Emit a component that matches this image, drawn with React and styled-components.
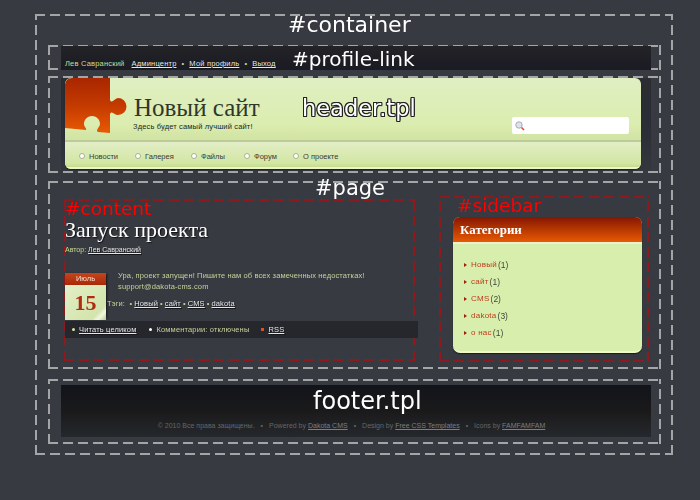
import React from "react";
import styled, { createGlobalStyle, css } from "styled-components";

const Global = createGlobalStyle`
  html, body { margin: 0; padding: 0; background: #373a40; }
  body { font-family: "Liberation Sans", Arial, sans-serif; width: 700px; height: 500px; overflow: hidden; }
  a { color: inherit; }
`;

const dashed = (color) => css`
  background-image:
    repeating-linear-gradient(90deg, ${color} 0 10px, transparent 10px 15px),
    repeating-linear-gradient(90deg, ${color} 0 10px, transparent 10px 15px),
    repeating-linear-gradient(0deg, ${color} 0 10px, transparent 10px 15px),
    repeating-linear-gradient(0deg, ${color} 0 10px, transparent 10px 15px);
  background-size: 100% 2px, 100% 2px, 2px 100%, 2px 100%;
  background-position: 0 0, 0 100%, 0 0, 100% 0;
  background-repeat: no-repeat;
`;

const Stage = styled.div`
  position: relative;
  width: 700px;
  height: 500px;
  padding: 14px 0 0 35px;
  box-sizing: border-box;
`;
const Container = styled.div`
  ${dashed("#a3a5a7")}
  box-sizing: border-box;
  width: 638px;
  height: 441px;
  padding: 31px 11px 0 13px;
  display: flex;
  flex-direction: column;
  filter: blur(0.3px);
`;
const Region = styled.section`
  ${dashed("#a3a5a7")}
  box-sizing: border-box;
  width: 613px;
  height: ${(p) => p.$h}px;
  margin-bottom: ${(p) => p.$mb}px;
  padding: ${(p) => p.$pad};
  display: flex;
`;
const ProfileBar = styled.div`
  flex: 1;
  background: linear-gradient(#232327, #1a1b23);
  display: flex;
  align-items: flex-end;
  gap: 5px;
  padding: 0 0 1px 4px;
  font-size: 7.5px;
  letter-spacing: 0.2px;
  line-height: 10px;
  color: #c9dc92;
  height: 24px;
  box-sizing: border-box;
`;
const UserName = styled.span`
  margin-right: 2px;
`;
const WhiteLink = styled.a`
  color: #e6e6e6;
  text-decoration: underline;
  text-shadow: 1px 1px 0 #15161a;
`;
const HeaderBack = styled.div`
  flex: 1;
  padding: 0 10px 0 4px;
  background: linear-gradient(#2b2d31 0, #2b2d37 50%, #34373c 100%);
`;
const Banner = styled.div`
  height: 91px;
  border-radius: 6px;
  overflow: hidden;
  background: linear-gradient(#e0efc2 0, #dcedb0 50%, #cfe2a0 71%);
  box-shadow: 0 1px 1px #20222a;
  display: flex;
  flex-direction: column;
`;
const BannerTop = styled.div`
  height: 64px;
  display: flex;
  position: relative;
  box-sizing: border-box;
  border-bottom: 2px solid #bccb98;
`;
const Puzzle = styled.svg`
  width: 62px;
  height: 56px;
  flex: none;
`;
const Brand = styled.div`
  padding: 15px 0 0 7px;
  display: flex;
  flex-direction: column;
`;
const SiteTitle = styled.div`
  font-family: "Liberation Serif", serif;
  font-size: 25px;
  line-height: 29px;
  color: #2f372b;
`;
const Tagline = styled.div`
  font-size: 7.5px;
  line-height: 10px;
  margin-left: -1px;
  color: #20261c;
  letter-spacing: 0.15px;
`;
const Search = styled.div`
  position: absolute;
  right: 12px;
  top: 39px;
  width: 117px;
  height: 17px;
  background: #fff;
  border-radius: 2px;
  display: flex;
  align-items: center;
  padding-left: 2px;
  box-sizing: border-box;
`;
const Nav = styled.nav`
  flex: 1;
  display: flex;
  align-items: center;
  padding: 3px 0 0 14px;
  background: linear-gradient(#e2eec6, #d3e6a3 85%, #c6db8c);
  border-bottom: 2px solid #eaf5c8;
  box-sizing: border-box;
`;
const NavItem = styled.div`
  width: ${(p) => p.$w}px;
  display: flex;
  align-items: center;
  gap: 4px;
  font-size: 7.5px;
  color: #363d30;
`;
const Bullet = styled.span`
  width: 6px;
  height: 6px;
  border-radius: 50%;
  background: #fff;
  border: 1px solid #a7b38f;
  box-sizing: border-box;
`;
const Content = styled.div`
  ${dashed("#8e1a1e")}
  box-sizing: border-box;
  width: 351px;
  height: 162px;
  margin-top: 16px;
  padding: 19px 0 0 1px;
  flex: none;
`;
const PostTitle = styled.h1`
  margin: 0;
  font-family: "Liberation Serif", serif;
  font-weight: 400;
  font-size: 22px;
  line-height: 24px;
  color: #fff;
  text-shadow: 1px 1px 1px #111;
`;
const Meta = styled.div`
  font-size: 7px;
  line-height: 10px;
  margin-top: 3px;
  color: #c9dc92;
`;
const PostRow = styled.div`
  display: flex;
  margin-top: 18px;
`;
const Calendar = styled.div`
  width: 41px;
  height: 44px;
  flex: none;
  display: flex;
  flex-direction: column;
  box-shadow: 1px 1px 2px #15161a;
`;
const Month = styled.div`
  height: 12px;
  background: linear-gradient(#c4451c, #a92808);
  color: #f4e0d0;
  font-size: 7.5px;
  line-height: 12px;
  text-align: center;
`;
const Day = styled.div`
  flex: 1;
  background: linear-gradient(135deg, #e3efc6 0, #d3e4ac 80%, #f2f6e2 88%, #b9ca92 100%);
  color: #b02c10;
  font-family: "Liberation Serif", serif;
  font-weight: 700;
  font-size: 22px;
  line-height: 35px;
  text-align: center;
`;
const PostBody = styled.div`
  font-size: 7.5px;
  color: #c3d39a;
  letter-spacing: 0.13px;
  line-height: 11px;
`;
const BodyText = styled.div`
  margin-top: -3px;
  padding: 0 0 0 12px;
`;
const Tags = styled.div`
  margin-top: 6px;
  padding-left: 1px;
  display: flex;
  gap: 2px;
`;
const PostBar = styled.div`
  width: 353px;
  height: 17px;
  margin-top: 4px;
  background: #26272d;
  display: flex;
  align-items: center;
  font-size: 7.5px;
  letter-spacing: 0.15px;
  color: #c3d39a;
`;
const BarItem = styled.div`
  display: flex;
  align-items: center;
  gap: 4px;
  margin-left: ${(p) => p.$ml}px;
`;
const Dot = styled.span`
  width: 3px;
  height: 3px;
  border-radius: ${(p) => (p.$square ? 0 : "50%")};
  background: ${(p) => p.$c};
`;
const SideZone = styled.div`
  ${dashed("#8e1a1e")}
  box-sizing: border-box;
  width: 210px;
  height: 166px;
  margin: 13px 0 0 24px;
  padding: 21px 7px 0 14px;
  flex: none;
`;
const SideBox = styled.div`
  height: 136px;
  border-radius: 7px;
  overflow: hidden;
  background: #d8eeac;
  box-shadow: 0 1px 1px #1c1e22;
  border-bottom: 2px solid #eef8c8;
  box-sizing: border-box;
`;
const SideHead = styled.div`
  height: 25px;
  background: linear-gradient(#851602, #e85a02);
  border-bottom: 2px solid #f0f0cf;
  box-sizing: content-box;
  color: #fff;
  font-family: "Liberation Serif", serif;
  font-weight: 700;
  font-size: 13px;
  line-height: 26px;
  padding-left: 7px;
`;
const CatList = styled.ul`
  list-style: none;
  margin: 0;
  padding: 12px 0 0 11px;
`;
const Cat = styled.li`
  height: 17px;
  display: flex;
  align-items: center;
  gap: 4px;
  font-size: 8.5px;
  color: #3f453a;
`;
const Arrow = styled.span`
  width: 0;
  height: 0;
  border-left: 3px solid #a2200a;
  border-top: 2.5px solid transparent;
  border-bottom: 2.5px solid transparent;
`;
const CatLink = styled.span`
  color: #bd3c1c;
  font-size: 8px;
  letter-spacing: 0.25px;
  margin-right: -3px;
`;
const Footer = styled.footer`
  flex: 1;
  background: linear-gradient(#12141a, #1a1a1b 50%, #25282c);
  display: flex;
  justify-content: center;
  align-items: flex-end;
  gap: 6px;
  padding: 0 9px 6px 0;
  font-size: 7px;
  line-height: 10px;
  color: #63666a;
`;
const FootLink = styled.a`
  text-decoration: underline;
  color: #7b7e82;
`;
const Label = styled.div`
  position: absolute;
  left: ${(p) => p.$x}px;
  top: ${(p) => p.$y}px;
  font-family: "DejaVu Sans", sans-serif;
  font-size: ${(p) => p.$size || 19}px;
  line-height: 24px;
  color: ${(p) => p.$c || "#fff"};
  white-space: nowrap;
  ${(p) =>
    p.$outline &&
    css`
      text-shadow: 1px 0 0 #222, -1px 0 0 #222, 0 1px 0 #222, 0 -1px 0 #222,
        1px 1px 0 #222, -1px -1px 0 #222, 1px -1px 0 #222, -1px 1px 0 #222;
    `}
`;

const nav = [
  ["Новости", 56],
  ["Галерея", 56],
  ["Файлы", 53],
  ["Форум", 49],
  ["О проекте", 70],
];
const cats = [
  ["Новый", 1],
  ["сайт", 1],
  ["CMS", 2],
  ["dakota", 3],
  ["о нас", 1],
];

export default function App() {
  return (
    <Stage>
      <Global />
      <Container>
        <Region $h={25} $mb={6} $pad="1px 10px 0 13px">
          <ProfileBar>
            <UserName>Лев Савранский</UserName>
            <WhiteLink>Админцентр</WhiteLink>
            <span>•</span>
            <WhiteLink>Мой профиль</WhiteLink>
            <span>•</span>
            <WhiteLink>Выход</WhiteLink>
          </ProfileBar>
        </Region>
        <Region $h={97} $mb={8} $pad="2px 10px 2px 13px">
          <HeaderBack>
            <Banner>
              <BannerTop>
                <Puzzle viewBox="0 0 62 56">
                  <defs>
                    <linearGradient id="pz" x1="0" y1="0" x2="0" y2="1">
                      <stop offset="0" stopColor="#a82600" />
                      <stop offset="0.5" stopColor="#c43a00" />
                      <stop offset="1" stopColor="#e85a04" />
                    </linearGradient>
                  </defs>
                  <path
                    fill="url(#pz)"
                    d="M7 0H45V22C47 26 49 21 53 20A8.5 8.5 0 1 1 53 37C49 37 47 32 45 36V55L33 54C30 52 35 49 35 46C35 41 31 38 27 38C23 38 19 41 19 46C19 49 22 50 21 52L0 50V7C0 3 3 0 7 0Z"
                  />
                </Puzzle>
                <Brand>
                  <SiteTitle>Новый сайт</SiteTitle>
                  <Tagline>Здесь будет самый лучший сайт!</Tagline>
                </Brand>
                <Search>
                  <svg width="12" height="12" viewBox="0 0 12 12">
                    <circle cx="5" cy="5" r="3.2" fill="#dfe2ea" stroke="#a9adb8" />
                    <path d="M7.5 7.5L10 10" stroke="#d8541c" strokeWidth="1.6" />
                  </svg>
                </Search>
              </BannerTop>
              <Nav>
                {nav.map(([t, w]) => (
                  <NavItem key={t} $w={w}>
                    <Bullet />
                    {t}
                  </NavItem>
                ))}
              </Nav>
            </Banner>
          </HeaderBack>
        </Region>
        <Region $h={188} $mb={10} $pad="2px 0 0 16px">
          <Content>
            <PostTitle>Запуск проекта</PostTitle>
            <Meta>
              Автор: <WhiteLink>Лев Савранский</WhiteLink>
            </Meta>
            <PostRow>
              <Calendar>
                <Month>Июль</Month>
                <Day>15</Day>
              </Calendar>
              <PostBody>
                <BodyText>
                  Ура, проект запущен! Пишите нам об всех замеченных недостатках!
                  <br />
                  support@dakota-cms.com
                </BodyText>
                <Tags>
                  Тэги: &nbsp;•
                  <WhiteLink>Новый</WhiteLink>•<WhiteLink>сайт</WhiteLink>•
                  <WhiteLink>CMS</WhiteLink>•<WhiteLink>dakota</WhiteLink>
                </Tags>
              </PostBody>
            </PostRow>
            <PostBar>
              <BarItem $ml={7}>
                <Dot $c="#d8e89c" />
                <WhiteLink>Читать целиком</WhiteLink>
              </BarItem>
              <BarItem $ml={13}>
                <Dot $c="#fff" />
                Комментарии: отключены
              </BarItem>
              <BarItem $ml={12}>
                <Dot $c="#d8541c" $square />
                <WhiteLink>RSS</WhiteLink>
              </BarItem>
            </PostBar>
          </Content>
          <SideZone>
            <SideBox>
              <SideHead>Категории</SideHead>
              <CatList>
                {cats.map(([t, n]) => (
                  <Cat key={t}>
                    <Arrow />
                    <CatLink>{t}</CatLink> ({n})
                  </Cat>
                ))}
              </CatList>
            </SideBox>
          </SideZone>
        </Region>
        <Region $h={65} $mb={0} $pad="6px 10px 7px 13px">
          <Footer>
            <span>© 2010 Все права защищены.</span>
            <span>•</span>
            <span>
              Powered by <FootLink>Dakota CMS</FootLink>
            </span>
            <span>•</span>
            <span>
              Design by <FootLink>Free CSS Templates</FootLink>
            </span>
            <span>•</span>
            <span>
              Icons by <FootLink>FAMFAMFAM</FootLink>
            </span>
          </Footer>
        </Region>
      </Container>
      <Label $x={288} $y={13} $size={22}>#container</Label>
      <Label $x={292} $y={47} $size={20}>#profile-link</Label>
      <Label $x={302} $y={96} $size={22.5} $outline>header.tpl</Label>
      <Label $x={315} $y={176} $size={21}>#page</Label>
      <Label $x={65} $y={197} $size={18.5} $c="#f00">#content</Label>
      <Label $x={457} $y={194} $size={18.5} $c="#f00">#sidebar</Label>
      <Label $x={313} $y={389} $size={24}>footer.tpl</Label>
    </Stage>
  );
}
